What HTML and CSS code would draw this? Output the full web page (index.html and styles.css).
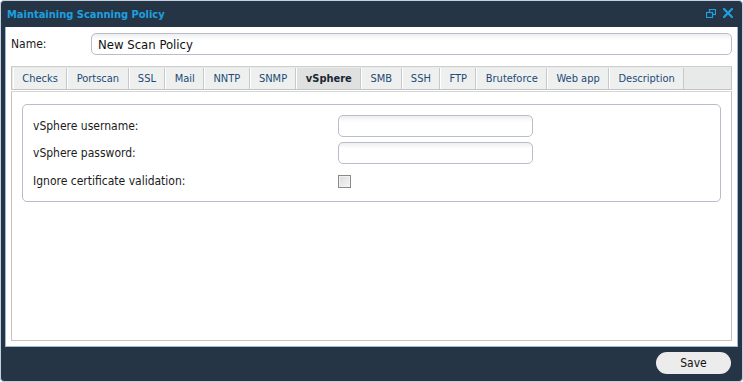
FILE: index.html
```html
<!DOCTYPE html>
<html lang="en">
<head>
    <meta charset="UTF-8">
    <title>Maintaining Scanning Policy</title>
    <link rel="stylesheet" href="styles.css">
</head>
<body>
    <div class="window">
        <div class="title-bar">
            <span class="title">Maintaining Scanning Policy</span>
            <div class="tools">
                <svg class="tool" width="10" height="9" viewBox="0 0 10 9">
                    <rect x="3.5" y="0.5" width="6" height="5" fill="none" stroke="#1ea0e0" stroke-width="1.2"/>
                    <rect x="0.5" y="3.5" width="6" height="5" fill="#253546" stroke="#1ea0e0" stroke-width="1.2"/>
                </svg>
                <svg class="tool" width="10" height="10" viewBox="0 0 10 10">
                    <path d="M1 1 L9 9 M9 1 L1 9" stroke="#1ea0e0" stroke-width="2.2" stroke-linecap="square"/>
                </svg>
            </div>
        </div>

        <div class="content">
            <div class="name-row">
                <label>Name:</label>
                <input type="text" class="text-input name-input" value="New Scan Policy">
            </div>

            <div class="tab-panel">
                <div class="tab-strip">
                    <div class="tab">Checks</div>
                    <div class="tab">Portscan</div>
                    <div class="tab">SSL</div>
                    <div class="tab">Mail</div>
                    <div class="tab">NNTP</div>
                    <div class="tab">SNMP</div>
                    <div class="tab active">vSphere</div>
                    <div class="tab">SMB</div>
                    <div class="tab">SSH</div>
                    <div class="tab">FTP</div>
                    <div class="tab">Bruteforce</div>
                    <div class="tab">Web app</div>
                    <div class="tab">Description</div>
                </div>
                <div class="tab-body">
                    <div class="fieldset">
                        <div class="field-row">
                            <label>vSphere username:</label>
                            <input type="text" class="text-input field-input">
                        </div>
                        <div class="field-row">
                            <label>vSphere password:</label>
                            <input type="password" class="text-input field-input">
                        </div>
                        <div class="field-row check-row">
                            <label>Ignore certificate validation:</label>
                            <span class="checkbox"></span>
                        </div>
                    </div>
                </div>
            </div>
        </div>

        <div class="footer">
            <button class="save">Save</button>
        </div>
    </div>
</body>
</html>
```

FILE: styles.css
```css
body {
    margin: 0;
    padding: 0;
    background: #ffffff;
    font-family: "DejaVu Sans Condensed", "DejaVu Sans", sans-serif;
    font-stretch: condensed;
}

.window {
    width: 743px;
    height: 382px;
    box-sizing: border-box;
    background-color: #253546;
    border: 1px solid #c3d1e3;
    border-radius: 4px;
    display: flex;
    flex-direction: column;
    padding: 0 4px;
}

.title-bar {
    height: 26px;
    display: flex;
    align-items: center;
    justify-content: space-between;
    padding-left: 2px;
    padding-right: 5px;
}

.title {
    color: #1ea0e0;
    font-weight: bold;
    font-size: 11px;
}

.tools {
    display: flex;
    align-items: center;
    gap: 7px;
    margin-top: -2px;
}

.content {
    height: 320px;
    box-sizing: border-box;
    background-color: #ffffff;
    border: 1px solid #9fb9dc;
    border-top: none;
    padding: 6px 5px 5px 5px;
    display: flex;
    flex-direction: column;
}

.name-row {
    display: flex;
    align-items: center;
    height: 22px;
}

.name-row label {
    width: 80px;
    font-size: 12px;
    color: #1b1b1b;
}

.text-input {
    box-sizing: border-box;
    border: 1px solid #b9bdc9;
    border-radius: 5px;
    background: linear-gradient(to bottom, #eeeeee, #ffffff 6px);
    font-family: inherit;
    font-size: 12px;
    color: #111111;
    outline: none;
    margin: 0;
}

.name-input {
    width: 641px;
    height: 22px;
    padding: 0 6px;
    font-size: 13px;
}

.tab-panel {
    margin-top: 11px;
    flex: 1;
    display: flex;
    flex-direction: column;
    border-top: 1px solid #cfcfcf;
}

.tab-strip {
    display: flex;
    height: 22px;
    background-color: #e8e9e9;
    border-left: 1px solid #c4c4c4;
    border-right: 1px solid #c4c4c4;
    border-bottom: 1px solid #c4c4c4;
    padding-left: 1px;
}

.tab {
    font-size: 11px;
    color: #1d4a73;
    padding: 0 8.35px;
    line-height: 21px;
    margin-top: 1px;
    background-color: #eef0ef;
    border-left: 1px solid #ffffff;
    border-right: 1px solid #c8c8c8;
    white-space: nowrap;
}

.tab.active {
    background-color: #dfe1e1;
    color: #1a2633;
    font-weight: bold;
}

.tab-body {
    flex: 1;
    margin-top: 1px;
    border: 1px solid #c4c4c4;
    border-top-color: #d6d6d6;
    padding: 12px 10px;
}

.fieldset {
    border: 1px solid #b9bdc9;
    border-radius: 5px;
    padding: 10px 10px 8px 10px;
    display: flex;
    flex-direction: column;
    gap: 5px;
}

.field-row {
    display: flex;
    align-items: center;
    height: 22px;
}

.field-row label {
    width: 305px;
    font-size: 12px;
    color: #1b1b1b;
}

.field-input {
    width: 195px;
    height: 22px;
}

.check-row {
    height: 24px;
}

.checkbox {
    width: 11px;
    height: 11px;
    border: 1px solid #8a8a8a;
    background: linear-gradient(135deg, #dcdcdc, #f6f6f6);
    box-shadow: inset 0 0 0 1px #f2f2f2;
}

.footer {
    flex: 1;
    display: flex;
    justify-content: flex-end;
    align-items: flex-start;
    padding-top: 5px;
    padding-right: 7px;
}

.save {
    width: 75px;
    height: 22px;
    border: none;
    border-radius: 11px;
    background-color: #ececec;
    font-family: inherit;
    font-size: 12px;
    color: #111111;
}
```
